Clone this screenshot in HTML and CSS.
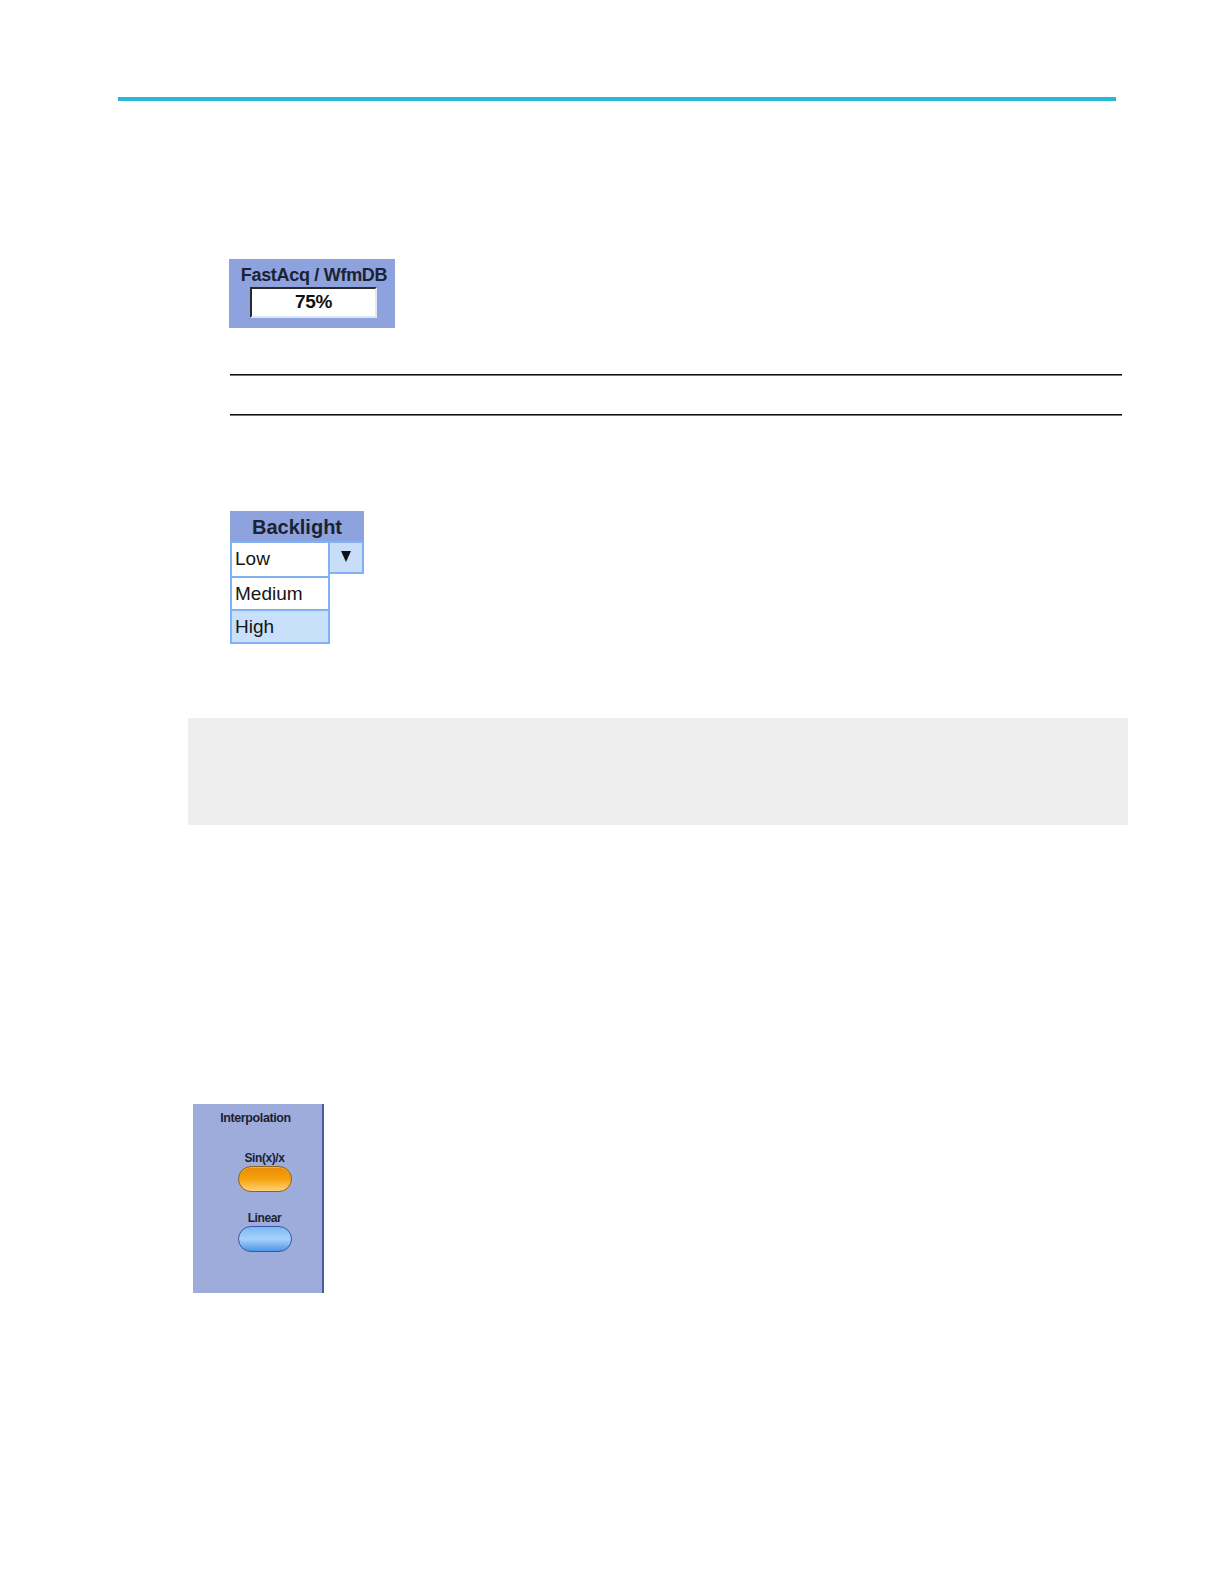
FILE: index.html
```html
<!DOCTYPE html>
<html>
<head>
<meta charset="utf-8">
<link rel="stylesheet" href="styles.css">
</head>
<body>
<div class="page">
  <div class="top-rule"></div>

  <div class="fastacq">
    <div class="fa-title">FastAcq / WfmDB</div>
    <div class="fa-field">75%</div>
  </div>

  <div class="rules">
    <div class="hair"></div>
    <div class="hair second"></div>
  </div>

  <div class="backlight">
    <div class="bl-head">Backlight</div>
    <div class="bl-body">
      <div class="bl-list">
        <div class="bl-item">Low</div>
        <div class="bl-item">Medium</div>
        <div class="bl-item sel">High</div>
      </div>
      <div class="bl-btn"><span class="tri"></span></div>
    </div>
  </div>

  <div class="note"></div>

  <div class="interp">
    <div class="ip-title">Interpolation</div>
    <div class="ip-opt">
      <div class="ip-label">Sin(x)/x</div>
      <div class="pill orange"></div>
    </div>
    <div class="ip-opt">
      <div class="ip-label">Linear</div>
      <div class="pill blue"></div>
    </div>
  </div>
</div>
</body>
</html>
```

FILE: styles.css
```css
html, body {
  margin: 0;
  padding: 0;
  background: #ffffff;
}
html {
  overflow: hidden;
}
body {
  font-family: "Liberation Sans", Arial, sans-serif;
}
.page {
  padding-top: 97px;
  padding-bottom: 20px;
}
.top-rule {
  margin-left: 118px;
  width: 998px;
  height: 4px;
  background: #29b7d6;
}

.fastacq {
  margin-top: 158px;
  margin-left: 229px;
  width: 166px;
  height: 69px;
  background: #8ea2dd;
  box-sizing: border-box;
  padding-top: 6px;
}
.fa-title {
  font-weight: bold;
  font-size: 18px;
  letter-spacing: -0.3px;
  color: #1b2231;
  text-align: center;
  line-height: 20px;
  padding-left: 4px;
}
.fa-field {
  margin: 2px 0 0 21px;
  width: 127px;
  height: 31px;
  box-sizing: border-box;
  background: #ffffff;
  border-top: 2px solid #2a2a2a;
  border-left: 2px solid #2a2a2a;
  border-right: 2px solid #dfe6f6;
  border-bottom: 2px solid #dfe6f6;
  font-weight: bold;
  font-size: 19px;
  letter-spacing: -0.4px;
  line-height: 25px;
  text-align: center;
  color: #111;
}

.rules {
  margin-top: 46px;
  margin-left: 230px;
  width: 892px;
}
.hair {
  height: 1px;
  background: #111;
  border-bottom: 1px solid #777;
}
.hair.second {
  margin-top: 38px;
}

.backlight {
  margin-top: 95px;
  margin-left: 230px;
  width: 134px;
}
.bl-head {
  height: 30px;
  background: #8ea2dd;
  font-weight: bold;
  font-size: 20px;
  color: #1b2231;
  text-align: center;
  line-height: 33px;
  box-sizing: border-box;
}
.bl-body {
  display: flex;
  align-items: flex-start;
}
.bl-list {
  width: 101px;
  border: 2px solid #7fb2f2;
  box-sizing: border-box;
}
.bl-item {
  height: 33px;
  box-sizing: border-box;
  padding-left: 3px;
  font-size: 19px;
  line-height: 31px;
  color: #151515;
  background: #ffffff;
}
.bl-item + .bl-item {
  border-top: 2px solid #7fb2f2;
}
.bl-item.sel {
  background: #c9e0fb;
}
.bl-btn {
  width: 34px;
  height: 33px;
  box-sizing: border-box;
  border: 2px solid #7fb2f2;
  border-left: none;
  background: #c7ddf8;
  display: flex;
  justify-content: center;
  padding-top: 8px;
}
.tri {
  width: 0;
  height: 0;
  border-left: 5px solid transparent;
  border-right: 5px solid transparent;
  border-top: 11px solid #111;
}

.note {
  margin-top: 74px;
  margin-left: 188px;
  width: 940px;
  height: 107px;
  background: #eeeeee;
}

.interp {
  margin-top: 279px;
  margin-left: 193px;
  width: 131px;
  height: 189px;
  box-sizing: border-box;
  background: #9eacdb;
  border-right: 2px solid #4a5a9a;
  padding-top: 7px;
  display: flex;
  flex-direction: column;
  align-items: center;
}
.ip-title {
  font-weight: bold;
  font-size: 12.5px;
  letter-spacing: -0.4px;
  color: #1b2231;
  line-height: 14px;
  margin-left: -4px;
}
.ip-opt {
  display: flex;
  flex-direction: column;
  align-items: center;
  margin-top: 27px;
  margin-left: 14px;
}
.ip-opt + .ip-opt {
  margin-top: 20px;
}
.ip-label {
  font-weight: bold;
  font-size: 12px;
  letter-spacing: -0.4px;
  color: #1b2231;
  line-height: 12px;
  margin-bottom: 2px;
}
.pill {
  width: 54px;
  height: 26px;
  border-radius: 13px;
  box-sizing: border-box;
}
.pill.orange {
  background: linear-gradient(#e98a05 0%, #f6a20c 50%, #ffd27a 100%);
  border: 1px solid #8a6420;
  box-shadow: inset 0 1px 0 #f7b030;
}
.pill.blue {
  background: linear-gradient(#7cb8f2 0%, #a7d2fb 50%, #4f96e6 100%);
  border: 1px solid #3d55a6;
}
```
